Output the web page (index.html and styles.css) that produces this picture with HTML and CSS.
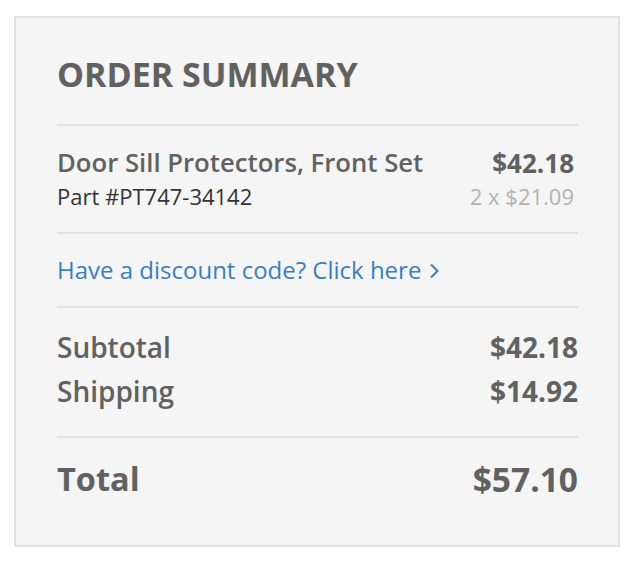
FILE: index.html
```html
<!DOCTYPE html>
<html lang="en">
<head>
    <meta charset="UTF-8">
    <meta name="viewport" content="width=device-width, initial-scale=1.0">
    <title>Order Summary</title>
    <link rel="stylesheet" href="styles.css">
</head>
<body>
    <div class="summary">
        <h1 class="summary-title">ORDER SUMMARY</h1>

        <div class="item">
            <div class="item-info">
                <div class="item-name">Door Sill Protectors, Front Set</div>
                <div class="item-part">Part #PT747-34142</div>
            </div>
            <div class="item-price">
                <div class="item-total">$42.18</div>
                <div class="item-unit">2 x $21.09</div>
            </div>
        </div>

        <div class="discount">
            <a href="#" class="discount-link">Have a discount code? Click here <svg class="chevron" width="12" height="16" viewBox="0 0 12 16"><path d="M3 1.5 L9.5 8 L3 14.5" fill="none" stroke="currentColor" stroke-width="2"/></svg></a>
        </div>

        <div class="totals">
            <div class="row">
                <span>Subtotal</span>
                <span class="amount">$42.18</span>
            </div>
            <div class="row">
                <span>Shipping</span>
                <span class="amount">$14.92</span>
            </div>
        </div>

        <div class="grand-total">
            <span>Total</span>
            <span class="amount">$57.10</span>
        </div>
    </div>
</body>
</html>
```

FILE: styles.css
```css
body {
    font-family: 'Open Sans', sans-serif;
    background: #fff;
    margin: 0;
    padding: 16px 16px 0 14px;
}
.summary {
    box-sizing: border-box;
    width: 606px;
    height: 531px;
    background: #f5f5f5;
    border: 2px solid #e2e2e2;
    padding: 33px 40px 0 41px;
    color: #616161;
}
.summary-title {
    font-size: 34px;
    font-weight: 700;
    line-height: 46px;
    margin: 0;
    padding-bottom: 27px;
    border-bottom: 2px solid #e0e0e0;
}
.item {
    display: flex;
    justify-content: space-between;
    padding: 20px 0 19px;
    border-bottom: 2px solid #e0e0e0;
}
.item-name {
    font-size: 25.7px;
    font-weight: 600;
    line-height: 34px;
}
.item-part {
    font-size: 22px;
    color: #333;
    line-height: 33px;
}
.item-price {
    text-align: right;
    padding-right: 4px;
}
.item-total {
    font-size: 26px;
    font-weight: 700;
    line-height: 34px;
}
.item-unit {
    font-size: 22px;
    color: #b3b3b3;
    line-height: 33px;
}
.discount {
    padding: 20px 0;
    border-bottom: 2px solid #e0e0e0;
}
.discount-link {
    color: #3b7fc0;
    text-decoration: none;
    font-size: 24px;
    line-height: 32px;
}
.chevron {
    vertical-align: 0;
}
.totals {
    padding: 17px 0 23px;
    border-bottom: 2px solid #e0e0e0;
}
.row {
    display: flex;
    justify-content: space-between;
    font-size: 28px;
    font-weight: 600;
    line-height: 44px;
}
.row .amount {
    font-weight: 700;
}
.grand-total {
    display: flex;
    justify-content: space-between;
    font-size: 32.5px;
    font-weight: 700;
    line-height: 48px;
    padding-top: 17px;
}
.grand-total .amount {
    font-size: 33.5px;
}
```
